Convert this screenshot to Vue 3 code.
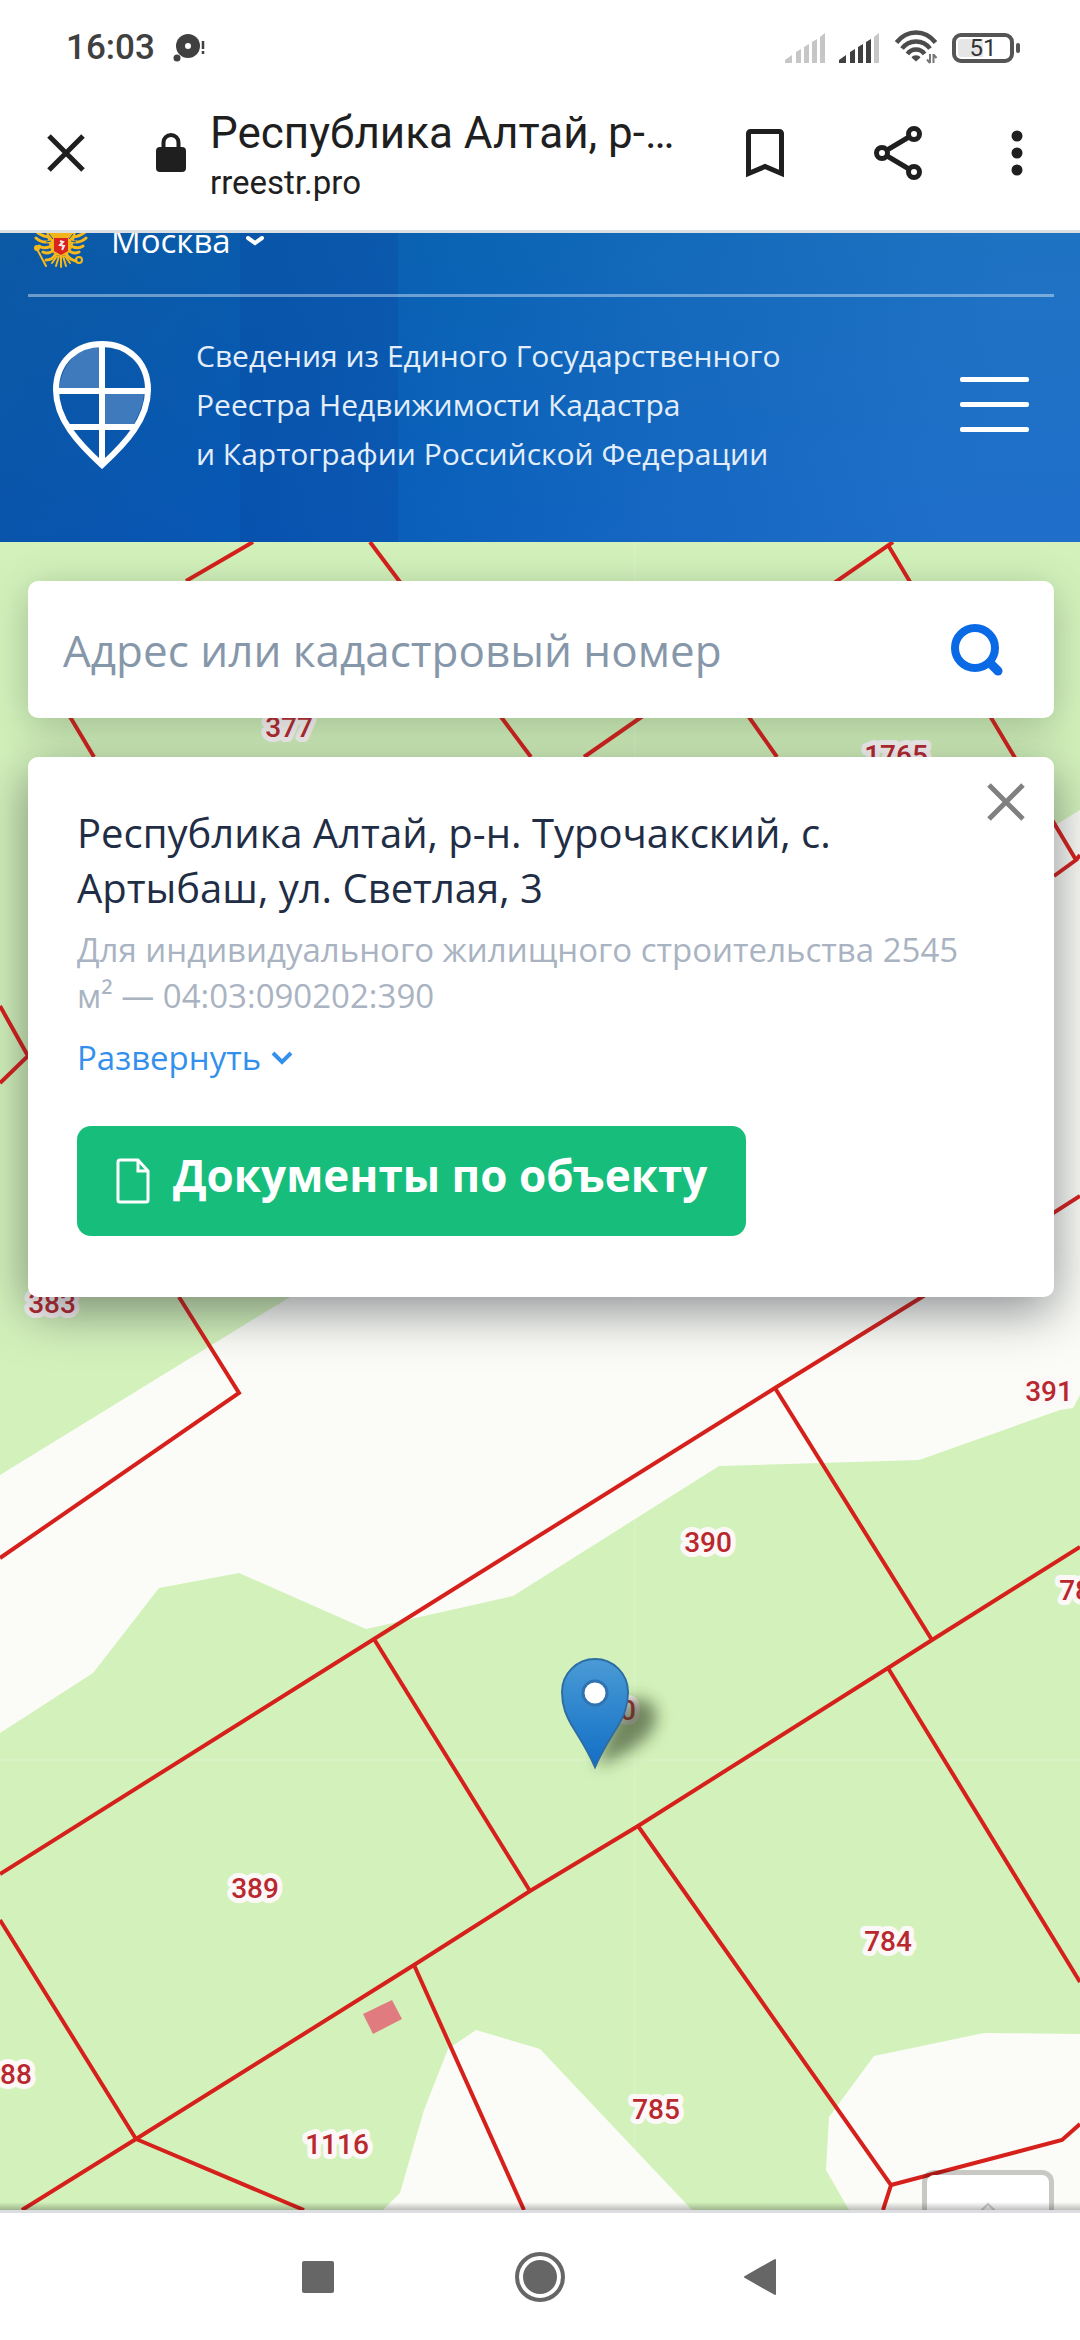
<template>
  <div class="screen">
    <!-- Строка состояния -->
    <div class="status-bar">
      <div class="status-left">
        <span class="clock">16:03</span>
        <svg class="notice" width="32" height="30" viewBox="0 0 32 30">
          <circle cx="15" cy="13" r="12" fill="#404040" />
          <circle cx="15" cy="13" r="3" fill="#fff" />
          <circle cx="4" cy="25" r="3.500" fill="#404040" />
          <path d="M30 8v8M30 18v3" stroke="#404040" stroke-width="2.500" />
        </svg>
      </div>
      <div class="status-right">
        <svg v-for="(active, i) in signals" :key="i" width="40" height="30" viewBox="0 0 40 30">
          <path
            v-for="(bar, n) in signalBars"
            :key="n"
            :d="bar"
            :fill="n < active ? '#404040' : '#c6c6c6'"
          />
        </svg>
        <svg class="wifi" width="43" height="36" viewBox="0 0 43 36">
          <g fill="none" stroke="#4c4c4c" stroke-width="4.500">
            <path d="M1.500 12.500C12-1 30-1 40.500 12.500" />
            <path d="M7 18.500C14 9 28 9 35 18.500" />
            <path d="M12.500 24C16.500 18 25.500 18 29.500 24" />
          </g>
          <path d="M16.500 27.500C18 24.500 24 24.500 25.500 27.500L21 31.500Z" fill="#4c4c4c" />
          <path d="M35 24v9M32 29.500l3 3.500M38.500 33v-9M41.500 28l-3-3.500" fill="none" stroke="#777" stroke-width="2" />
        </svg>
        <div class="battery"><span>51</span></div>
      </div>
    </div>

    <!-- Панель браузера -->
    <div class="browser-bar">
      <button class="icon-btn" aria-label="Закрыть вкладку">
        <svg width="40" height="40" viewBox="0 0 40 40"><path d="M3 3l34 34M37 3L3 37" stroke="#1f1f1f" stroke-width="5" /></svg>
      </button>
      <svg class="lock" width="30" height="40" viewBox="0 0 30 40">
        <rect y="14" width="30" height="25" rx="4" fill="#1f1f1f" />
        <path d="M7.500 15V9.500a7.500 7.500 0 0 1 15 0V15" fill="none" stroke="#1f1f1f" stroke-width="4" />
      </svg>
      <div class="page-info">
        <div class="page-title">Республика Алтай, р-…</div>
        <div class="page-host">rreestr.pro</div>
      </div>
      <div class="browser-actions">
        <button class="icon-btn" aria-label="Добавить в закладки">
          <svg width="40" height="50" viewBox="0 0 40 50">
            <path d="M3.500 45.500V5.500a2 2 0 0 1 2-2h29a2 2 0 0 1 2 2v40L20 38.500Z" fill="none" stroke="#1f1f1f" stroke-width="5" />
          </svg>
        </button>
        <button class="icon-btn" aria-label="Поделиться">
          <svg width="50" height="56" viewBox="0 0 50 56" fill="none" stroke="#1f1f1f" stroke-width="5">
            <path d="M41 9L9 28l32 19" />
            <circle cx="41" cy="9" r="5.500" fill="#fff" />
            <circle cx="9" cy="28" r="5.500" fill="#fff" />
            <circle cx="41" cy="47" r="5.500" fill="#fff" />
          </svg>
        </button>
        <button class="icon-btn" aria-label="Меню браузера">
          <svg width="12" height="46" viewBox="0 0 12 46" fill="#1f1f1f">
            <circle cx="6" cy="6" r="5.500" />
            <circle cx="6" cy="23" r="5.500" />
            <circle cx="6" cy="40" r="5.500" />
          </svg>
        </button>
      </div>
    </div>

    <!-- Шапка сайта -->
    <header class="site-header">
      <div class="region-row">
        <svg class="emblem" width="54" height="60" viewBox="0 0 54 60">
          <path d="M12 22H42L38 38 33 45H21L16 38Z" fill="#f3b41b" />
          <g fill="none" stroke="#f6b81c" stroke-width="3" stroke-linecap="round">
            <path d="M18 27C11 27 5 25 1 20M19 31C12 33 6 32 2 28M19 35C14 38 9 39 5 36M21 39C17 43 13 44 9 42" />
            <path d="M36 27C43 27 49 25 53 20M35 31C42 33 48 32 52 28M35 35C40 38 45 39 49 36M33 39C37 43 41 44 45 42" />
            <path d="M22 43C20 48 17 50 12 50M32 43C34 48 37 50 42 51" />
            <path d="M3 39l9 17" stroke-width="2" />
            <path d="M27 44v13M25 46l-3 10M29 46l3 10M23 46l-5 7M31 46l5 7" stroke-width="2" />
          </g>
          <circle cx="3" cy="38" r="3" fill="#f6b81c" />
          <path d="M15 24l4 5M39 24l-4 5M12 32l5-1M42 32l-5-1" stroke="#1259a4" stroke-width="1" />
          <path d="M20 28h14v13l-7 4-7-4Z" fill="#d8231f" />
          <path d="M26 31l3 1-3 3 4 1-2 4" fill="none" stroke="#f6e8e8" stroke-width="2" />
          <circle cx="45" cy="50" r="3" fill="none" stroke="#f6b81c" stroke-width="2" />
        </svg>
        <button class="region-btn">
          Москва
          <svg width="20" height="12" viewBox="0 0 20 12"><path d="M3 3l7 5 7-5" fill="none" stroke="#fff" stroke-width="4" stroke-linecap="round" /></svg>
        </button>
      </div>
      <div class="brand-row">
        <svg class="logo" width="98" height="128" viewBox="0 0 98 128">
          <path d="M6 49C8 22 26 6 46 5v44Z" fill="#3f7abc" />
          <path d="M51 53h40c-1 12-6 23-12 32H51Z" fill="#3f7abc" />
          <path d="M49 124C25 102 3 78 3 49 3 20 24 3 49 3s46 17 46 46c0 29-22 53-46 75Z" fill="none" stroke="#fff" stroke-width="6" />
          <path d="M49 3v118M3 50h92M17 86h64" fill="none" stroke="#fff" stroke-width="6" />
        </svg>
        <p class="brand-text">
          Сведения из Единого Государственного<br />
          Реестра Недвижимости Кадастра<br />
          и Картографии Российской Федерации
        </p>
        <button class="burger" aria-label="Меню"><i></i><i></i><i></i></button>
      </div>
    </header>

    <!-- Карта -->
    <main class="map">
      <svg class="map-canvas" viewBox="0 542 1080 1668" preserveAspectRatio="xMidYMin slice">
        <defs>
          <linearGradient id="pin" x1="0" y1="0" x2="0" y2="1">
            <stop offset="0" stop-color="#4a9bd5" />
            <stop offset="1" stop-color="#126fc6" />
          </linearGradient>
          <filter id="soft" x="-50%" y="-50%" width="200%" height="200%"><feGaussianBlur stdDeviation="8" /></filter>
        </defs>
        <rect y="542" width="1080" height="1668" fill="#fbfcf7" />
        <g fill="#d3f2bb">
          <path d="M0 542H1080V810L290 1297 0 1475Z" />
          <path d="M0 1733L93 1673 159 1588 239 1573 366 1629 513 1596 719 1466 919 1460 1060 1410 1073 1408 1080 1395V2210H0Z" />
        </g>
        <g fill="#fbfcf7">
          <path d="M383 2210L400 2193 424 2110 448 2049 476 2030 540 2049 692 2210Z" />
          <path d="M849 2210L826 2170 829 2117 874 2056 984 2033 1080 2034V2210Z" />
        </g>
        <path d="M363 2014L392 2000 402 2019 373 2034Z" fill="#e07c80" />
        <path d="M635 542V2210M0 1760H1080" stroke="#fff" stroke-opacity=".25" stroke-width="1" />
        <g class="borders">
          <path v-for="d in borders" :key="d" :d="d" />
        </g>
        <text v-for="p in parcels" :key="p.x" class="parcel" :x="p.x" :y="p.y">{{ p.id }}</text>
        <path d="M596 1766C620 1758 650 1742 656 1722C660 1700 640 1692 620 1704Z" fill="#2d3b20" fill-opacity=".6" filter="url(#soft)" />
        <path
          d="M595 1767C588 1751 582 1742 574 1729C566 1716 562 1706 562 1692a33 33 0 0 1 66 0C628 1706 624 1716 616 1729C608 1742 602 1751 595 1767Z"
          fill="url(#pin)"
          stroke="#2e6da4"
          stroke-width="2"
        />
        <circle cx="595" cy="1693" r="12" fill="#fff" stroke="#2f74b0" stroke-width="3" />
      </svg>

      <form class="search" @submit.prevent>
        <input v-model="query" type="text" placeholder="Адрес или кадастровый номер" aria-label="Адрес или кадастровый номер" />
        <button class="icon-btn" aria-label="Найти">
          <svg width="54" height="54" viewBox="0 0 54 54" fill="none" stroke="#0a6ae6">
            <circle cx="25" cy="25" r="20" stroke-width="8" />
            <path d="M40 40l8 8" stroke-width="9" stroke-linecap="round" />
          </svg>
        </button>
      </form>

      <section class="card">
        <button class="icon-btn card-close" aria-label="Закрыть">
          <svg width="38" height="38" viewBox="0 0 38 38"><path d="M2 2l34 34M36 2L2 36" stroke="#808080" stroke-width="5" /></svg>
        </button>
        <h2>Республика Алтай, р-н. Турочакский, с. Артыбаш, ул. Светлая, 3</h2>
        <p class="details">Для индивидуального жилищного строительства 2545 м² — 04:03:090202:390</p>
        <button class="expand">
          Развернуть
          <svg width="22" height="14" viewBox="0 0 22 14"><path d="M2 2l9 9 9-9" fill="none" stroke="#3490ec" stroke-width="4" /></svg>
        </button>
        <button class="docs">
          <svg width="34" height="46" viewBox="0 0 34 46" fill="none" stroke="#fff" stroke-width="3">
            <path d="M4 2H22L32 13V42a2 2 0 0 1-2 2H4a2 2 0 0 1-2-2V4a2 2 0 0 1 2-2Z" />
            <path d="M22 2v11h10" />
          </svg>
          <span>Документы по объекту</span>
        </button>
      </section>

      <button class="to-top" aria-label="Наверх">
        <svg width="60" height="36" viewBox="0 0 60 36"><path d="M2 30L30 3l28 27" fill="#f4f4f2" stroke="#ccc" stroke-width="2" /></svg>
      </button>
    </main>

    <!-- Системная навигация -->
    <nav class="system-nav">
      <button aria-label="Недавние">
        <svg width="50" height="50" viewBox="0 0 50 50"><rect x="9" y="9" width="32" height="32" rx="2" fill="#666" /></svg>
      </button>
      <button aria-label="Домой">
        <svg width="50" height="50" viewBox="0 0 50 50">
          <circle cx="25" cy="25" r="23" fill="none" stroke="#666" stroke-width="4" />
          <circle cx="25" cy="25" r="17" fill="#666" />
        </svg>
      </button>
      <button aria-label="Назад">
        <svg width="50" height="50" viewBox="0 0 50 50"><path d="M38 8V42L8 25Z" fill="#666" stroke="#666" stroke-width="2" stroke-linejoin="round" /></svg>
      </button>
    </nav>
  </div>
</template>

<script setup>
import { ref } from 'vue';

const query = ref('');

// число закрашенных делений для каждой сим-карты
const signals = [0, 4];
const signalBars = [
  'M0 30v-3l7-5v8Z',
  'M11 30v-11l5-3v14Z',
  'M19 30v-16l5-3v19Z',
  'M27 30v-21l5-3v24Z',
  'M35 30V4l5-4v30Z',
];

// границы участков
const borders = [
  'M253 542L186 581',
  'M370 542L531 757',
  'M60 700L94 757',
  'M893 542L584 757',
  'M888 545L1076 860L1054 876',
  'M1076 860L1080 855',
  'M737 700L777 757',
  'M0 1006L28 1056L0 1083',
  'M1080 1196L922 1297L775 1388L374 1639L0 1874',
  'M179 1297L239 1393L0 1558',
  'M775 1388L932 1640',
  'M1080 1547L932 1640L888 1668L638 1826L530 1891L414 1965L136 2139L22 2210',
  'M374 1639L530 1891',
  'M888 1668L1080 1982',
  'M638 1826L891 2185L883 2210',
  'M891 2185L1062 2140L1080 2124',
  'M414 1965L524 2210',
  'M0 1920L136 2139L304 2210',
];

// кадастровые подписи
const parcels = [
  { id: '377', x: 289, y: 737 },
  { id: '1765', x: 896, y: 765 },
  { id: '383', x: 52, y: 1313 },
  { id: '391', x: 1049, y: 1401 },
  { id: '390', x: 708, y: 1552 },
  { id: '786', x: 1083, y: 1600 },
  { id: '390', x: 612, y: 1720 },
  { id: '389', x: 255, y: 1898 },
  { id: '784', x: 888, y: 1951 },
  { id: '388', x: 8, y: 2084 },
  { id: '785', x: 656, y: 2119 },
  { id: '1116', x: 337, y: 2154 },
];
</script>

<style>
body {
  margin: 0;
  background: #fff;
}
</style>

<style scoped>
.screen {
  min-height: 100vh;
  display: flex;
  flex-direction: column;
  font-family: "Open Sans", "Noto Sans", sans-serif;
  background: #fff;
  overflow: hidden;
}
svg {
  display: block;
  flex: none;
}
button {
  border: none;
  padding: 0;
  background: none;
  font-family: inherit;
  cursor: pointer;
}
.icon-btn {
  display: flex;
  flex: none;
}

.status-bar {
  height: 96px;
  padding: 0 60px 0 66px;
  display: flex;
  align-items: center;
  justify-content: space-between;
  font-family: Roboto, sans-serif;
}
.status-left,
.status-right {
  display: flex;
  align-items: center;
}
.status-left {
  gap: 18px;
}
.status-right {
  gap: 14px;
}
.clock {
  font-size: 35px;
  line-height: 40px;
  font-weight: 500;
  color: #404040;
}
.wifi {
  margin-left: 2px;
}
.battery {
  position: relative;
  box-sizing: border-box;
  width: 62px;
  height: 30px;
  margin-right: 6px;
  border: 4px solid #555;
  border-radius: 9px;
  background: linear-gradient(to right, #e6e6e6 50%, #fff 50%) content-box;
  padding: 2px;
  font-size: 24px;
  line-height: 19px;
  text-align: center;
  color: #333;
}
.battery::after {
  content: "";
  position: absolute;
  right: -10px;
  top: 6px;
  width: 4px;
  height: 10px;
  border-radius: 2px;
  background: #555;
}

.browser-bar {
  height: 134px;
  padding: 0 57px 0 46px;
  display: flex;
  align-items: center;
  border-bottom: 3px solid #dcdfe2;
  font-family: Roboto, sans-serif;
  color: #1f1f1f;
}
.browser-bar > * {
  margin-bottom: 20px;
}
.lock {
  margin-left: 70px;
}
.page-info {
  flex: 1;
  margin-left: 24px;
  padding-top: 8px;
  white-space: nowrap;
}
.page-title {
  font-size: 44px;
  line-height: 52px;
}
.page-host {
  font-size: 33px;
  line-height: 48px;
}
.browser-actions {
  display: flex;
  align-items: center;
  gap: 88px;
}

.site-header {
  padding: 0 26px 0 28px;
  background:
    linear-gradient(to right, transparent 240px, rgba(10, 70, 160, 0.3) 240px, rgba(10, 70, 160, 0.3) 398px, transparent 398px),
    linear-gradient(to bottom, rgba(10, 110, 150, 0.2), rgba(0, 80, 180, 0.14)),
    linear-gradient(100deg, #0c54a8 0%, #0858b4 25%, #0c62bc 42%, #186ac4 62%, #2474ce 90%);
}
.region-row {
  height: 61px;
  display: flex;
  align-items: flex-start;
  border-bottom: 3px solid rgba(255, 255, 255, 0.4);
  overflow: hidden;
}
.emblem {
  margin: -23px 0 0 6px;
}
.region-btn {
  display: flex;
  align-items: center;
  gap: 14px;
  margin: -14px 0 0 23px;
  font-size: 33px;
  line-height: 44px;
  color: #fff;
}
.brand-row {
  height: 245px;
  display: flex;
  align-items: center;
}
.logo {
  margin: -30px 0 0 25px;
}
.brand-text {
  flex: 1;
  margin: -30px 0 0 45px;
  font-size: 30px;
  line-height: 49px;
  color: #e4eefa;
  white-space: nowrap;
}
.burger {
  display: grid;
  gap: 20px;
  width: 69px;
  margin: -30px 25px 0 0;
}
.burger i {
  height: 5px;
  border-radius: 2px;
  background: #fff;
}

.map {
  position: relative;
  flex: 1;
  padding: 39px 26px 913px 28px;
  overflow: hidden;
  background: #fbfcf7;
}
.map::after {
  content: "";
  position: absolute;
  left: 0;
  right: 0;
  bottom: 0;
  height: 8px;
  background: linear-gradient(to bottom, transparent, rgba(0, 0, 0, 0.25));
}
.map-canvas {
  position: absolute;
  inset: 0;
  width: 100%;
  height: 100%;
}
.borders {
  fill: none;
  stroke: #d6201c;
  stroke-width: 4px;
}
.parcel {
  font: 500 28px Roboto, sans-serif;
  fill: #b8282e;
  stroke: #fdf8f8;
  stroke-width: 10px;
  stroke-linejoin: round;
  paint-order: stroke;
  text-anchor: middle;
}

.search {
  position: relative;
  display: flex;
  align-items: center;
  height: 137px;
  padding: 0 50px 0 35px;
  border-radius: 10px;
  background: #fff;
  box-shadow: 0 8px 40px rgba(40, 60, 50, 0.3);
}
.search input {
  flex: 1;
  min-width: 0;
  padding: 0;
  border: none;
  outline: none;
  background: none;
  font: 44px "Open Sans", "Noto Sans", sans-serif;
  color: #1f2d45;
}
.search input::placeholder {
  color: #8797aa;
  opacity: 1;
}

.card {
  position: relative;
  margin-top: 39px;
  padding: 48px 80px 61px 49px;
  border-radius: 10px;
  background: #fff;
  box-shadow: 0 14px 50px rgba(30, 34, 45, 0.5);
}
.card-close {
  position: absolute;
  top: 26px;
  right: 29px;
}
h2 {
  margin: 0;
  padding-right: 60px;
  font-size: 40px;
  font-weight: 400;
  line-height: 55px;
  color: #1f2d45;
}
.details {
  margin: 12px 0 0;
  font-size: 33px;
  line-height: 46px;
  color: #a9b3c1;
}
.expand {
  display: flex;
  align-items: center;
  gap: 10px;
  margin-top: 16px;
  font-size: 33px;
  line-height: 46px;
  color: #3490ec;
}
.docs {
  display: flex;
  align-items: center;
  gap: 23px;
  margin-top: 45px;
  padding: 0 39px;
  height: 110px;
  border-radius: 14px;
  background: #17be7b;
  font-size: 44px;
  line-height: 60px;
  font-weight: 700;
  color: #fff;
}
.docs span {
  padding-bottom: 12px;
}

.to-top {
  position: absolute;
  right: 26px;
  bottom: -92px;
  width: 132px;
  height: 132px;
  display: flex;
  justify-content: center;
  padding-top: 26px;
  border: 5px solid rgba(0, 0, 0, 0.2);
  border-radius: 12px;
  background: #fff;
  background-clip: padding-box;
}

.system-nav {
  height: 127px;
  border-top: 3px solid #dcdde0;
  display: flex;
  align-items: center;
  justify-content: center;
  gap: 122px;
}
.system-nav button {
  width: 100px;
  display: flex;
  justify-content: center;
}
</style>
